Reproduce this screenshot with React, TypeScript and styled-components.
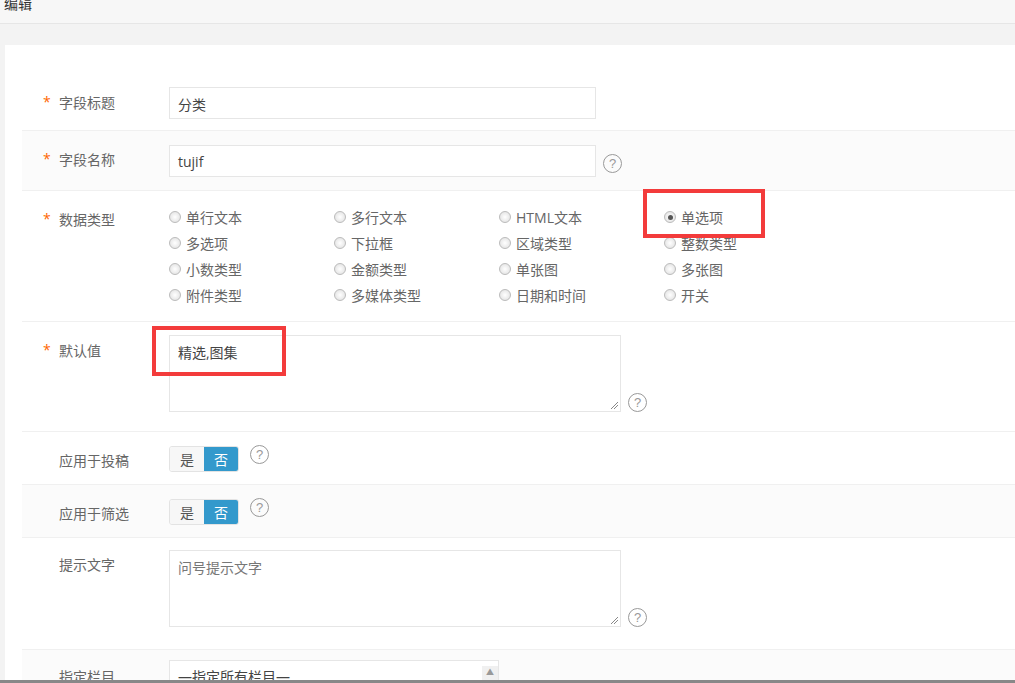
import React from "react";
import styled, { createGlobalStyle } from "styled-components";

const G = createGlobalStyle`
  html,body{margin:0;padding:0;background:#f3f3f3;overflow:hidden;}
  body{font-family:"Open Sans","Noto Sans CJK SC",sans-serif;font-size:14px;color:#666;}
`;
const Page = styled.div`width:1015px;height:683px;position:relative;overflow:hidden;`;
const Header = styled.div`height:23px;background:#f7f7f7;border-bottom:1px solid #e6e6e6;font-size:14px;color:#333;line-height:8px;padding-left:4px;overflow:hidden;`;
const Panel = styled.div`margin:21px 0 0 5px;background:#fff;padding:32px 0 0 17px;height:640px;box-sizing:border-box;`;
const Row = styled.div<{ $h: number; $alt?: boolean }>`
  height:${p => p.$h}px;box-sizing:border-box;display:flex;align-items:flex-start;
  background:${p => (p.$alt ? "#fbfbfb" : "#fff")};border-bottom:1px solid #f0f0f0;position:relative;
`;
const Label = styled.div<{ $top: number }>`width:147px;flex:none;padding-top:${p => p.$top}px;display:flex;color:#666;`;
const Star = styled.span`color:#f60;box-sizing:border-box;padding-left:21px;width:37px;`;
const Field = styled.div<{ $top: number; $gap?: number }>`padding-top:${p => p.$top}px;display:flex;align-items:flex-end;gap:${p => p.$gap ?? 7}px;`;
const Input = styled.div<{ $w: number; $h: number }>`
  width:${p => p.$w}px;height:${p => p.$h}px;box-sizing:border-box;border:1px solid #e6e6e6;background:#fff;
  padding:6px 8px;color:#444;font-size:14px;position:relative;
`;
const Grip = styled.svg`position:absolute;right:2px;bottom:2px;`;
const Help = styled.span<{ $mb?: number }>`width:19px;height:19px;border:1.5px solid #999;border-radius:50%;box-sizing:border-box;display:flex;align-items:center;justify-content:center;font-size:13px;color:#999;margin-bottom:${p => p.$mb ?? 0}px;font-family:"Liberation Sans",sans-serif;`;
const Radios = styled.div`display:grid;grid-template-columns:repeat(4,165px);row-gap:6px;padding-top:16px;`;
const Radio = styled.div`display:flex;align-items:center;gap:5px;height:20px;color:#666;`;
const Dot = styled.span<{ $on?: boolean }>`width:12px;height:12px;border-radius:50%;border:1px solid #bbb;box-sizing:border-box;background:radial-gradient(circle,#fff,#ddd);display:flex;align-items:center;justify-content:center;
  &::after{content:"";width:5px;height:5px;border-radius:50%;background:${p => (p.$on ? "#555" : "transparent")};}`;
const Toggle = styled.div`display:flex;border-radius:3px;overflow:hidden;border:1px solid #e3e3e3;height:26px;box-sizing:border-box;`;
const TBtn = styled.span<{ $on?: boolean }>`width:34px;display:flex;align-items:center;justify-content:center;background:${p => (p.$on ? "#3399cc" : "#f7f7f7")};color:${p => (p.$on ? "#fff" : "#555")};`;
const RedBox = styled.div<{ $x: number; $y: number; $w: number; $h: number }>`position:absolute;left:${p => p.$x}px;top:${p => p.$y}px;width:${p => p.$w}px;height:${p => p.$h}px;border:4px solid #f33b3b;box-sizing:border-box;pointer-events:none;`;
const Scroll = styled.div`position:absolute;left:0;bottom:0;width:100%;height:3px;background:#888;`;
const Sel = styled.div`width:330px;height:30px;border:1px solid #e6e6e6;background:#fff;box-sizing:border-box;display:flex;justify-content:space-between;padding:5px 0 0 8px;color:#444;`;
const SBar = styled.div`width:16px;background:#f0f0f0;display:flex;justify-content:center;font-size:8px;color:#999;`;

const grip = <Grip width="8" height="8"><path d="M1 8L8 1M4 8L8 4" stroke="#888" strokeWidth="1" /></Grip>;
const opts = ["单行文本","多行文本","HTML文本","单选项","多选项","下拉框","区域类型","整数类型","小数类型","金额类型","单张图","多张图","附件类型","多媒体类型","日期和时间","开关"];

export default function App() {
  return (
    <Page>
      <G />
      <Header>编辑</Header>
      <Panel>
        <Row $h={54}><Label $top={15}><Star>*</Star>字段标题</Label><Field $top={10}><Input $w={427} $h={32}>分类</Input></Field></Row>
        <Row $h={60} $alt><Label $top={18}><Star>*</Star>字段名称</Label><Field $top={14}><Input $w={427} $h={32}>tujif</Input><Help $mb={4}>?</Help></Field></Row>
        <Row $h={131}><Label $top={18}><Star>*</Star>数据类型</Label>
          <Radios>{opts.map((o, i) => <Radio key={o}><Dot $on={i === 3} />{o}</Radio>)}</Radios>
        </Row>
        <Row $h={110}><Label $top={18}><Star>*</Star>默认值</Label><Field $top={13}><Input $w={452} $h={77}>精选,图集{grip}</Input><Help>?</Help></Field></Row>
        <Row $h={53}><Label $top={18}><Star />应用于投稿</Label><Field $top={13} $gap={11}><Toggle><TBtn>是</TBtn><TBtn $on>否</TBtn></Toggle><Help $mb={8}>?</Help></Field></Row>
        <Row $h={53} $alt><Label $top={18}><Star />应用于筛选</Label><Field $top={13} $gap={11}><Toggle><TBtn>是</TBtn><TBtn $on>否</TBtn></Toggle><Help $mb={8}>?</Help></Field></Row>
        <Row $h={112}><Label $top={16}><Star />提示文字</Label><Field $top={12}><Input $w={452} $h={77} style={{ color: "#777" }}>问号提示文字{grip}</Input><Help>?</Help></Field></Row>
        <Row $h={60} $alt><Label $top={16}><Star />指定栏目</Label><Field $top={10}><Sel>—指定所有栏目—<SBar>▲</SBar></Sel></Field></Row>
      </Panel>
      <RedBox $x={643} $y={189} $w={122} $h={49} />
      <RedBox $x={152} $y={326} $w={134} $h={50} />
      <Scroll />
    </Page>
  );
}
